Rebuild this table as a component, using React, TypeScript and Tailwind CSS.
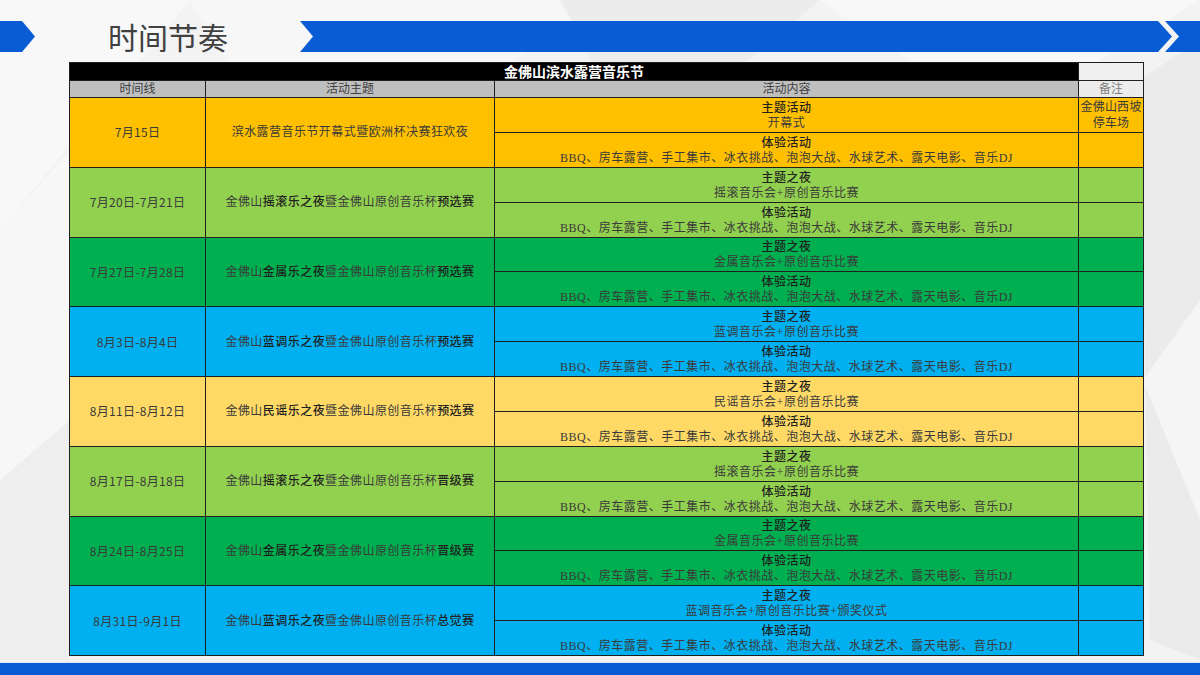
import type { ReactNode } from 'react';

const CJK = '"Liberation Serif", "Noto Sans CJK SC", serif';
const SANS = '"Noto Sans CJK SC", "Noto Sans", sans-serif';

type Row = {
  date: string;
  theme: ReactNode;
  head: string;
  sub: string;
  bg: string;
  note?: string;
};

const tail = 'BBQ、房车露营、手工集市、冰衣挑战、泡泡大战、水球艺术、露天电影、音乐DJ';

function Theme({ night, stage }: { night: string; stage: string }) {
  return (
    <>
      金佛山<b className="font-medium text-[#1f1f1f]">{night}</b>暨金佛山原创音乐杯
      <b className="font-medium text-[#1f1f1f]">{stage}</b>
    </>
  );
}

const rows: Row[] = [
  {
    date: '7月15日',
    theme: '滨水露营音乐节开幕式暨欧洲杯决赛狂欢夜',
    head: '主题活动',
    sub: '开幕式',
    bg: 'bg-[#ffc000]',
    note: '金佛山西坡停车场',
  },
  { date: '7月20日-7月21日', theme: <Theme night="摇滚乐之夜" stage="预选赛" />, head: '主题之夜', sub: '摇滚音乐会+原创音乐比赛', bg: 'bg-[#92d050]' },
  { date: '7月27日-7月28日', theme: <Theme night="金属乐之夜" stage="预选赛" />, head: '主题之夜', sub: '金属音乐会+原创音乐比赛', bg: 'bg-[#00b050]' },
  { date: '8月3日-8月4日', theme: <Theme night="蓝调乐之夜" stage="预选赛" />, head: '主题之夜', sub: '蓝调音乐会+原创音乐比赛', bg: 'bg-[#00b0f0]' },
  { date: '8月11日-8月12日', theme: <Theme night="民谣乐之夜" stage="预选赛" />, head: '主题之夜', sub: '民谣音乐会+原创音乐比赛', bg: 'bg-[#ffd966]' },
  { date: '8月17日-8月18日', theme: <Theme night="摇滚乐之夜" stage="晋级赛" />, head: '主题之夜', sub: '摇滚音乐会+原创音乐比赛', bg: 'bg-[#92d050]' },
  { date: '8月24日-8月25日', theme: <Theme night="金属乐之夜" stage="晋级赛" />, head: '主题之夜', sub: '金属音乐会+原创音乐比赛', bg: 'bg-[#00b050]' },
  { date: '8月31日-9月1日', theme: <Theme night="蓝调乐之夜" stage="总觉赛" />, head: '主题之夜', sub: '蓝调音乐会+原创音乐比赛+颁奖仪式', bg: 'bg-[#00b0f0]' },
];

function Content({ head, sub, bg }: { head: string; sub: string; bg: string }) {
  return (
    <div className={`${bg} flex flex-col items-center justify-center pt-[2px] text-[12px] leading-[15px] tracking-[0.5px]`}>
      <span className="font-medium text-[#1f1f1f]">{head}</span>
      <span>{sub}</span>
    </div>
  );
}

function Backdrop() {
  // faint faceted background
  return (
    <svg className="absolute inset-0 h-full w-full" viewBox="0 0 1200 675" preserveAspectRatio="none">
      <rect width="1200" height="675" fill="#f3f3f3" />
      <polygon points="0,0 190,0 0,230" fill="#f8f8f8" />
      <polygon points="190,0 620,0 300,180" fill="#f7f7f7" />
      <polygon points="560,0 820,0 640,150" fill="#ececec" />
      <polygon points="820,0 1200,0 1000,120" fill="#f8f8f8" />
      <polygon points="1140,80 1200,40 1200,660 1150,640" fill="#ebebeb" />
      <polygon points="0,480 70,420 70,660 0,660" fill="#eeeeee" />
      <polygon points="0,230 70,150 70,420 0,480" fill="#f7f7f7" />
      <polygon points="1143,380 1200,300 1200,520" fill="#f5f5f5" />
    </svg>
  );
}

function Bars() {
  return (
    <svg className="absolute left-0 top-0" width="1200" height="62" viewBox="0 0 1200 62">
      <polygon points="0,21 22,21 35,36.5 22,52 0,52" fill="#0a5cd5" />
      <polygon points="300,21 1158,21 1172,36.5 1158,52 300,52 313,36.5" fill="#0a5cd5" />
      <polygon points="1165,21 1200,21 1200,52 1165,52 1179,36.5" fill="#0a5cd5" />
    </svg>
  );
}

export default function App() {
  return (
    <div className="relative flex h-[675px] w-[1200px] flex-col overflow-hidden" style={{ fontFamily: SANS }}>
      <Backdrop />

      {/* Header */}
      <div className="relative h-[62px] shrink-0">
        <Bars />
        <h1 className="relative pl-[108px] pt-[17px] text-[30px] font-normal leading-[38px] text-[#404040]">时间节奏</h1>
      </div>

      {/* Table */}
      <div
        className="relative ml-[69px] grid w-[1075px] grid-cols-[135px_288px_583px_64px] grid-rows-[17px_16px_repeat(16,33.875px)] gap-px border border-[#1f1f1f] bg-[#1f1f1f] text-center text-[#3a3a3a]"
        style={{ fontFamily: CJK }}
      >
        <div className="col-span-3 flex items-center justify-center bg-black text-[14px] font-bold text-white" style={{ fontFamily: SANS }}>
          金佛山滨水露营音乐节
        </div>
        <div className="bg-[#f0f0f0]" />
        <div className="flex items-center justify-center bg-[#bfbfbf] text-[12px] text-[#404040]">时间线</div>
        <div className="flex items-center justify-center bg-[#bfbfbf] text-[12px] text-[#404040]">活动主题</div>
        <div className="flex items-center justify-center bg-[#bfbfbf] text-[12px] text-[#404040]">活动内容</div>
        <div className="flex items-center justify-center bg-[#ececec] text-[12px] text-[#808080]">备注</div>

        {rows.map((r, i) => (
          <div key={i} className="contents">
            <div className={`${r.bg} row-span-2 flex items-center justify-center text-[12px] tracking-[0.3px]`} style={{ fontFamily: SANS }}>
              {r.date}
            </div>
            <div className={`${r.bg} row-span-2 flex items-center justify-center text-[12px] tracking-[0.45px]`}>{r.theme}</div>
            <Content head={r.head} sub={r.sub} bg={r.bg} />
            <div className={`${r.bg} px-[1px] pt-[1px] text-[12px] leading-[16px] tracking-[0.2px]`}>{r.note ?? ''}</div>
            <Content head="体验活动" sub={tail} bg={r.bg} />
            <div className={r.bg} />
          </div>
        ))}
      </div>

      {/* Footer band */}
      <div className="relative mt-auto h-[13px] shrink-0 border-t border-[#dbe6f5] bg-[#0a5cd5]" />
    </div>
  );
}
